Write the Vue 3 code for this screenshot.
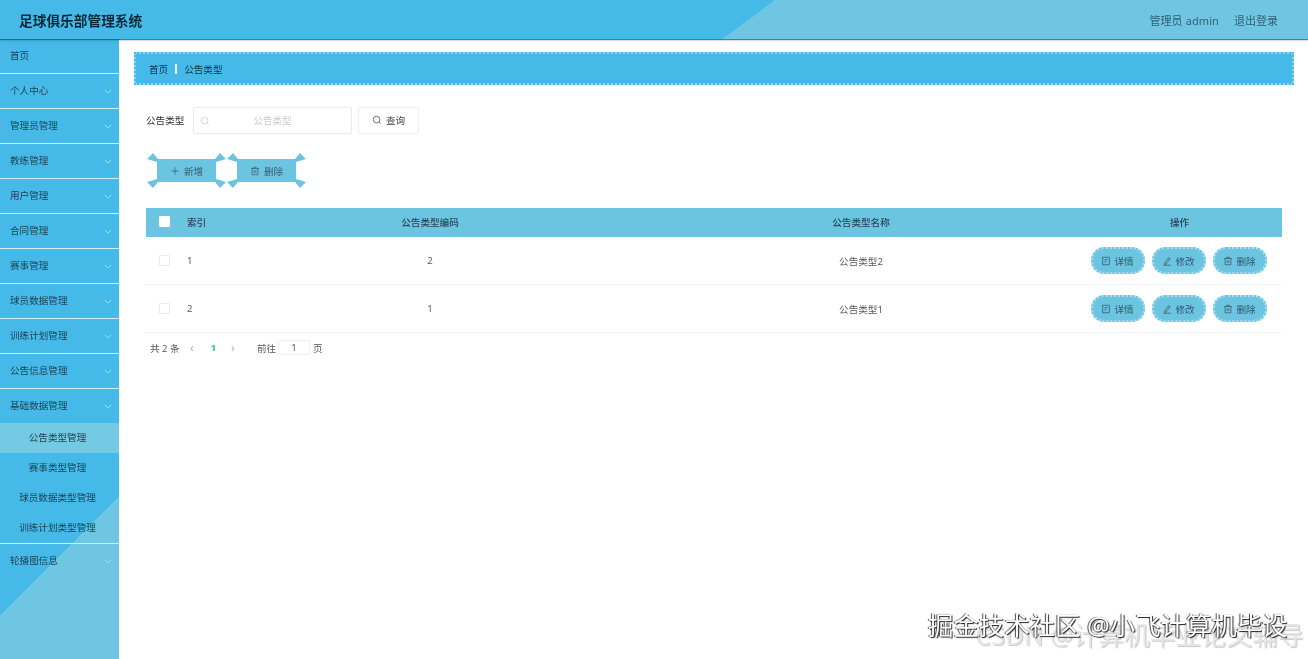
<template>
  <div class="page">
    <header class="topbar">
      <h1 class="title">足球俱乐部管理系统</h1>
      <div class="user">
        <span class="admin">管理员 admin</span>
        <span>退出登录</span>
      </div>
    </header>

    <div class="body">
      <aside class="side">
        <div v-for="item in menu" :key="item.name" class="menu-item">
          <div class="menu-head">
            <span class="menu-name">{{ item.name }}</span>
            <svg v-if="item.arrow" class="chevron" viewBox="0 0 10 6"><polyline points="1 1 5 5 9 1" /></svg>
          </div>
          <div v-if="item.children" class="sub">
            <div
              v-for="(child, i) in item.children"
              :key="child"
              class="sub-item"
              :class="{ active: i === 0 }"
            >{{ child }}</div>
          </div>
        </div>
      </aside>

      <main class="main">
        <div class="crumb">
          <span>首页</span>
          <i class="crumb-sep"></i>
          <span>公告类型</span>
        </div>

        <div class="search">
          <label class="search-label">公告类型</label>
          <div class="input">
            <svg class="icon search-icon" viewBox="0 0 12 12"><circle cx="5.5" cy="5.5" r="4" /><line x1="8.5" y1="8.5" x2="10.5" y2="10.5" /></svg>
            <span>公告类型</span>
          </div>
          <button class="query" type="button">
            <svg class="icon" viewBox="0 0 12 12"><circle cx="5.5" cy="5.5" r="4" /><line x1="8.5" y1="8.5" x2="10.5" y2="10.5" /></svg>
            查询
          </button>
        </div>

        <div class="tools">
          <button class="flare" type="button">
            <svg class="icon" viewBox="0 0 12 12"><path d="M6 1.5v9M1.5 6h9" /></svg>
            新增
          </button>
          <button class="flare" type="button">
            <svg class="icon" viewBox="0 0 12 12"><path d="M1.5 3h9M4.5 3V1.5h3V3M2.5 3v7.5h7V3M5 5v3.5M7 5v3.5" /></svg>
            删除
          </button>
        </div>

        <table class="table">
          <colgroup>
            <col class="c-check" />
            <col class="c-index" />
            <col class="c-code" />
            <col class="c-name" />
            <col class="c-ops" />
          </colgroup>
          <thead>
            <tr>
              <th><span class="check head-check"></span></th>
              <th class="left">索引</th>
              <th>公告类型编码</th>
              <th>公告类型名称</th>
              <th>操作</th>
            </tr>
          </thead>
          <tbody>
            <tr v-for="row in rows" :key="row.index">
              <td><span class="check"></span></td>
              <td class="left">{{ row.index }}</td>
              <td>{{ row.code }}</td>
              <td>{{ row.name }}</td>
              <td>
                <div class="ops">
                  <button class="op" type="button">
                    <svg class="icon" viewBox="0 0 12 12"><path d="M2 1.5h8v9H2zM4 4.5h4M4 7h2.5" /></svg>
                    详情
                  </button>
                  <button class="op" type="button">
                    <svg class="icon" viewBox="0 0 12 12"><path d="M3.5 8 8 2l1.8 1.4L5.3 9.2 3.2 10zM1.5 11h9" /></svg>
                    修改
                  </button>
                  <button class="op" type="button">
                    <svg class="icon" viewBox="0 0 12 12"><path d="M1.5 3h9M4.5 3V1.5h3V3M2.5 3v7.5h7V3M5 5v3.5M7 5v3.5" /></svg>
                    删除
                  </button>
                </div>
              </td>
            </tr>
          </tbody>
        </table>

        <div class="pager">
          <span class="total">共 2 条</span>
          <span class="arrow">‹</span>
          <b class="num">1</b>
          <span class="arrow">›</span>
          <span class="goto">前往</span>
          <span class="page-input">1</span>
          <span>页</span>
        </div>
      </main>
    </div>

    <div class="mark mark-csdn">CSDN @计算机毕业论文辅导</div>
    <div class="mark mark-juejin">掘金技术社区 @小飞计算机毕设</div>
  </div>
</template>

<script setup>
const menu = [
  { name: '首页' },
  { name: '个人中心', arrow: true },
  { name: '管理员管理', arrow: true },
  { name: '教练管理', arrow: true },
  { name: '用户管理', arrow: true },
  { name: '合同管理', arrow: true },
  { name: '赛事管理', arrow: true },
  { name: '球员数据管理', arrow: true },
  { name: '训练计划管理', arrow: true },
  { name: '公告信息管理', arrow: true },
  {
    name: '基础数据管理',
    arrow: true,
    children: ['公告类型管理', '赛事类型管理', '球员数据类型管理', '训练计划类型管理'],
  },
  { name: '轮播图信息', arrow: true },
];

const rows = [
  { index: 1, code: 2, name: '公告类型2' },
  { index: 2, code: 1, name: '公告类型1' },
];
</script>

<style>
body {
  margin: 0;
  background: #fff;
}
</style>

<style scoped>
.page {
  position: relative;
  width: 1308px;
  height: 659px;
  overflow: hidden;
  font-family: "Noto Sans", "Noto Sans CJK SC", sans-serif;
  font-size: 9.6px;
  color: #444;
  background: #fff;
  /* the reference is a soft, rescaled capture */
  filter: blur(0.4px);
}

.topbar {
  position: relative;
  z-index: 2;
  display: flex;
  align-items: center;
  justify-content: space-between;
  height: 39px;
  padding: 0 30px 0 19px;
  box-sizing: border-box;
  background: linear-gradient(143.6deg, #45bae8 460px, #6ec6e2 460px);
  box-shadow: 0 1px 1px rgba(70, 70, 85, 0.75), 0 2px 4px rgba(0, 0, 0, 0.08);
}
.title {
  margin: 0;
  font-size: 13.7px;
  font-weight: 700;
  color: #0c2837;
}
.user {
  display: flex;
  gap: 15px;
  font-size: 11px;
  color: #356076;
}
.admin {
  letter-spacing: 0.1px;
}

.body {
  display: flex;
  height: 620px;
}

.side {
  width: 119px;
  flex: none;
  background: linear-gradient(135deg, #45bae8 408px, #6ec6e2 408px);
}
.menu-item {
  border-bottom: 1px solid #cfeef8;
  color: #1f4355;
}
.menu-item:last-child {
  border-bottom: 0;
}
.menu-head {
  display: flex;
  align-items: center;
  justify-content: space-between;
  height: 34px;
  padding: 0 7px 0 10px;
}
.menu-name {
  padding-bottom: 2px;
}
.chevron {
  width: 8px;
  height: 5px;
  fill: none;
  stroke: #a5e0f3;
  stroke-width: 1.2;
}
.sub-item {
  height: 30px;
  padding-right: 4px;
  line-height: 30px;
  text-align: center;
}
.sub-item.active {
  background: rgba(125, 203, 226, 0.85);
}

.main {
  flex: 1;
  padding: 13px 14px 0 15px;
}

.crumb {
  display: flex;
  align-items: center;
  height: 29px;
  padding: 0 13px;
  border: 2px dotted #45bae8;
  background:
    linear-gradient(#45bae8, #45bae8) padding-box,
    linear-gradient(rgba(69, 186, 232, 0.6), rgba(69, 186, 232, 0.6)) border-box;
  color: #12303f;
}
.crumb-sep {
  width: 2px;
  height: 10px;
  margin: 0 7px;
  background: #e3f6fc;
}

.search {
  display: flex;
  align-items: center;
  height: 27px;
  margin: 22px 0 0 12px;
  color: #333;
}
.search-label {
  width: 47px;
  padding-bottom: 2px;
}
.input {
  position: relative;
  display: flex;
  align-items: center;
  justify-content: center;
  width: 159px;
  height: 27px;
  box-sizing: border-box;
  padding-bottom: 2px;
  border: 1px solid #e8ebee;
  border-radius: 2px;
  color: #c6cbd1;
}
.search-icon {
  position: absolute;
  left: 6px;
  top: 8px;
}
.icon {
  width: 10px;
  height: 10px;
  flex: none;
  fill: none;
  stroke: currentColor;
  stroke-width: 0.9;
}
.query {
  display: flex;
  align-items: center;
  justify-content: center;
  gap: 4px;
  width: 61px;
  height: 27px;
  margin-left: 6px;
  padding: 0 0 2px;
  border: 1px solid #eceef1;
  border-radius: 2px;
  background: #fff;
  color: #444;
  font: inherit;
}

.tools {
  display: flex;
  gap: 1px;
  margin: 19px 0 0 13px;
}
.flare {
  display: flex;
  align-items: center;
  justify-content: center;
  gap: 4px;
  width: 79px;
  height: 35px;
  padding: 0;
  border: 0;
  background: #6bc5e0;
  color: #3a5e6f;
  font: inherit;
  clip-path: polygon(6px 0, 11px 6px, 68px 6px, 73px 0, 79px 6px, 69px 9px, 69px 26px, 79px 29px, 73px 35px, 68px 29px, 11px 29px, 6px 35px, 0 29px, 10px 26px, 10px 9px, 0 6px);
}

.table {
  width: 1136px;
  margin: 20px 0 0 12px;
  border-collapse: collapse;
  table-layout: fixed;
}
.c-check { width: 31px; }
.c-index { width: 38px; }
.c-code { width: 430px; }
.c-name { width: 432px; }
.c-ops { width: 205px; }
.table th {
  height: 27px;
  padding: 0 0 2px;
  background: #6bc5e0;
  font-weight: 500;
  color: #2a4655;
}
.table td {
  height: 47px;
  padding: 0;
  border-bottom: 1px solid #f0f2f4;
  text-align: center;
  color: #5a5a5a;
}
.table .left {
  padding-left: 10px;
  text-align: left;
}
.check {
  display: block;
  width: 9px;
  height: 9px;
  margin-left: 13px;
  border: 1px solid #e8eaed;
  border-radius: 1px;
  background: #fff;
}
.head-check {
  border-color: #fff;
}
.ops {
  display: flex;
  justify-content: center;
  gap: 7px;
  padding-right: 2px;
}
.op {
  display: flex;
  align-items: center;
  justify-content: center;
  gap: 3px;
  width: 54px;
  height: 27px;
  box-sizing: border-box;
  padding: 0;
  border: 2px dotted #6bc5e0;
  border-radius: 13px;
  background:
    linear-gradient(#6bc5e0, #6bc5e0) padding-box,
    linear-gradient(rgba(107, 197, 224, 0.6), rgba(107, 197, 224, 0.6)) border-box;
  color: #32566a;
  font: inherit;
}

.pager {
  display: flex;
  align-items: center;
  height: 15px;
  margin: 7px 0 0 16px;
  color: #5a5a5a;
}
.total {
  width: 40px;
}
.arrow {
  width: 6px;
  font-size: 12px;
  line-height: 15px;
  color: #a9afb6;
}
.num {
  width: 35px;
  text-align: center;
  color: #2fbf8f;
}
.goto {
  margin-left: 20px;
  width: 21px;
}
.page-input {
  width: 30px;
  height: 13px;
  margin-right: 3px;
  border: 1px solid #eceef1;
  border-radius: 2px;
  line-height: 13px;
  text-align: center;
}

/* watermarks sit on top of the screenshot */
.mark {
  position: absolute;
  z-index: 3;
  white-space: nowrap;
  line-height: 30px;
}
.mark-csdn {
  left: 975px;
  top: 621px;
  font-size: 25.6px;
  color: #e6e6e6;
  text-shadow: 1px 1px 1px #c8c8c8;
}
.mark-juejin {
  left: 928px;
  top: 610px;
  font-size: 25.4px;
  color: #fff;
  text-shadow: 1px 1px 1px #222, -1px 0 1px #444;
}
</style>
